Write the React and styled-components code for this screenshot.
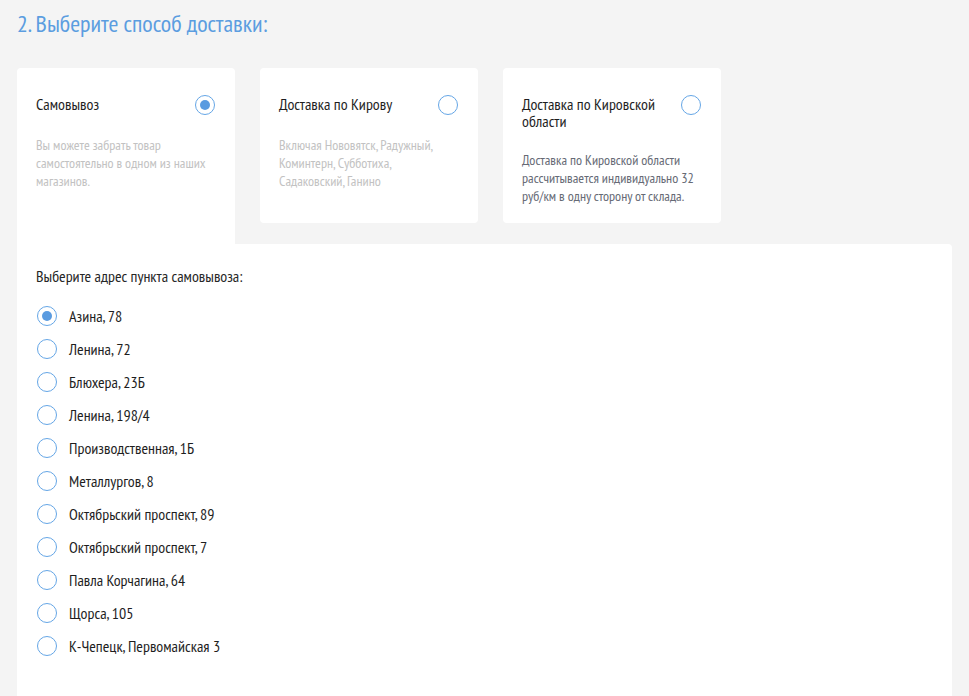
import React, { useState } from 'react'
import styled, { createGlobalStyle } from 'styled-components'

const GlobalStyle = createGlobalStyle`
    * { box-sizing: border-box; }
    body {
        margin: 0;
        background: #f4f4f4;
        font-family: "PT Sans Narrow", "Liberation Sans Narrow", "DejaVu Sans Condensed", "Roboto Condensed", "Liberation Sans", sans-serif;
        color: #222;
    }
`

const methods = [
    {
        id: 'pickup',
        title: 'Самовывоз',
        text: 'Вы можете забрать товар самостоятельно в одном из наших магазинов.',
    },
    {
        id: 'city',
        title: 'Доставка по Кирову',
        text: 'Включая Нововятск, Радужный, Коминтерн, Субботиха, Садаковский, Ганино',
    },
    {
        id: 'region',
        title: 'Доставка по Кировской области',
        text: 'Доставка по Кировской области рассчитывается индивидуально 32 руб/км в одну сторону от склада.',
        dark: true,
    },
]

const addresses = [
    'Азина, 78',
    'Ленина, 72',
    'Блюхера, 23Б',
    'Ленина, 198/4',
    'Производственная, 1Б',
    'Металлургов, 8',
    'Октябрьский проспект, 89',
    'Октябрьский проспект, 7',
    'Павла Корчагина, 64',
    'Щорса, 105',
    'К-Чепецк, Первомайская 3',
]

function App() {
    const [method, setMethod] = useState('pickup')
    const [address, setAddress] = useState(0)

    return (
        <Page>
            <GlobalStyle />
            <Title>2. Выберите способ доставки:</Title>
            <Cards>
                {methods.map(m => (
                    <Card key={m.id} $active={method === m.id} onClick={() => setMethod(m.id)}>
                        <CardHead>
                            <CardTitle>{m.title}</CardTitle>
                            <Radio $checked={method === m.id} />
                        </CardHead>
                        <CardText $dark={m.dark}>{m.text}</CardText>
                    </Card>
                ))}
            </Cards>
            <Panel>
                <PanelTitle>Выберите адрес пункта самовывоза:</PanelTitle>
                <List>
                    {addresses.map((a, i) => (
                        <Item key={a} onClick={() => setAddress(i)}>
                            <Radio $checked={address === i} />
                            <span>{a}</span>
                        </Item>
                    ))}
                </List>
            </Panel>
        </Page>
    )
}

export default App

const Page = styled.div`
    padding: 10px 17px 0;
`

const Title = styled.h1`
    margin: 0;
    font-weight: 400;
    font-size: 24px;
    line-height: 28px;
    color: #5b9de0;
`

const Cards = styled.div`
    display: flex;
    align-items: flex-start;
    gap: 25px;
    margin-top: 30px;
`

const Card = styled.div`
    width: 218px;
    height: ${p => p.$active ? '176px' : '155px'};
    background: #fff;
    border-radius: ${p => p.$active ? '4px 4px 0 0' : '4px'};
    padding: 27px 20px 0 19px;
    cursor: pointer;
`

const CardHead = styled.div`
    display: flex;
    justify-content: space-between;
    align-items: flex-start;
    gap: 12px;
`

const CardTitle = styled.div`
    font-size: 16px;
    line-height: 17px;
    color: #1e1e1e;
    padding-top: 1px;
`

const CardText = styled.p`
    margin: 21px 0 0;
    font-size: 14px;
    line-height: 18px;
    color: ${p => p.$dark ? '#666a75' : '#c2c2c2'};
`

const Radio = styled.span`
    flex: none;
    position: relative;
    width: 20px;
    height: 20px;
    border-radius: 50%;
    border: 1.5px solid #65a6e6;
    background: #fff;
    &::after{
        content: '';
        position: absolute;
        left: 50%;
        top: 50%;
        width: 10px;
        height: 10px;
        margin: -5px 0 0 -5px;
        border-radius: 50%;
        background: #5a9be0;
        display: ${p => p.$checked ? 'block' : 'none'};
    }
`

const Panel = styled.div`
    background: #fff;
    border-radius: 0 4px 0 0;
    min-height: 460px;
    padding: 23px 19px 40px;
`

const PanelTitle = styled.div`
    font-size: 16px;
    line-height: 18px;
    color: #262626;
`

const List = styled.div`
    display: flex;
    flex-direction: column;
    gap: 13px;
    margin-top: 21px;
`

const Item = styled.label`
    display: flex;
    align-items: center;
    gap: 12px;
    height: 20px;
    padding-left: 1px;
    font-size: 16px;
    color: #1e1e1e;
    cursor: pointer;
`
